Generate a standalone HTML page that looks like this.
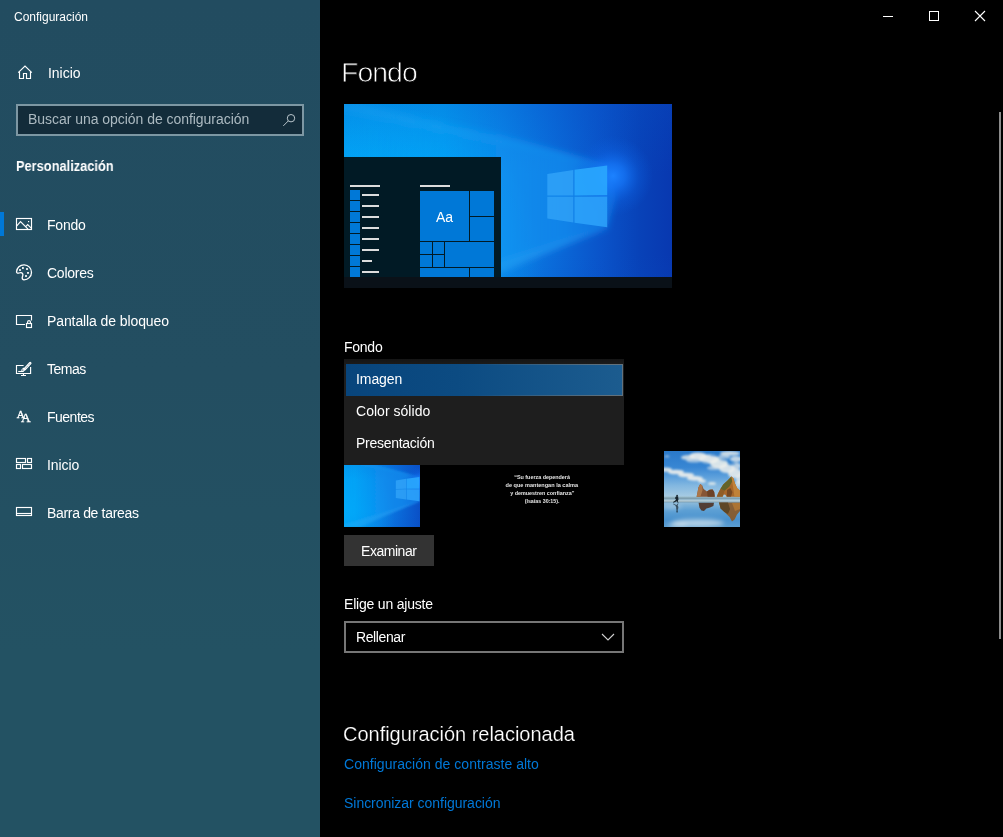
<!DOCTYPE html>
<html lang="es">
<head>
<meta charset="utf-8">
<title>Configuración</title>
<style>
html,body{margin:0;padding:0;background:#000;}
body{width:1003px;height:837px;position:relative;overflow:hidden;font-family:"Liberation Sans",sans-serif;color:#fff;}
.abs{position:absolute;}
.t{will-change:transform;position:absolute;white-space:nowrap;line-height:20px;height:20px;font-size:14px;color:#fff;}
#side{position:absolute;left:0;top:0;width:320px;height:837px;background:linear-gradient(180deg,#224c60 0%,#234e61 45%,#235263 78%,#235263 100%);}
#main{position:absolute;left:320px;top:0;width:683px;height:837px;background:#000;}
svg{position:absolute;overflow:visible;}
.ico{stroke:#fff;stroke-width:1.15;fill:none;}
.link{color:#0078d7;}
</style>
</head>
<body>
<svg width="0" height="0" style="position:absolute">
  <defs>
    <linearGradient id="wpg" x1="0" y1="0" x2="328" y2="0" gradientUnits="userSpaceOnUse">
      <stop offset="0" stop-color="#02a4f4"/>
      <stop offset="0.3" stop-color="#04a0f3"/>
      <stop offset="0.48" stop-color="#0a86e9"/>
      <stop offset="0.62" stop-color="#0a6edc"/>
      <stop offset="0.78" stop-color="#0a54ca"/>
      <stop offset="0.9" stop-color="#0842b8"/>
      <stop offset="1" stop-color="#0838b0"/>
    </linearGradient>
    <linearGradient id="wpv" x1="0" y1="-10" x2="0" y2="190" gradientUnits="userSpaceOnUse">
      <stop offset="0" stop-color="#0650c4" stop-opacity="0.3"/>
      <stop offset="0.4" stop-color="#0650c4" stop-opacity="0"/>
      <stop offset="0.8" stop-color="#0650c4" stop-opacity="0"/>
      <stop offset="1" stop-color="#0650c4" stop-opacity="0.14"/>
    </linearGradient>
    <radialGradient id="wpbl" cx="30" cy="165" r="170" gradientUnits="userSpaceOnUse">
      <stop offset="0" stop-color="#00b8ff" stop-opacity="0.75"/>
      <stop offset="0.5" stop-color="#00b0ff" stop-opacity="0.35"/>
      <stop offset="1" stop-color="#00a8ff" stop-opacity="0"/>
    </radialGradient>
    <radialGradient id="wpglow" cx="269" cy="72" r="40" gradientUnits="userSpaceOnUse">
      <stop offset="0" stop-color="#1c82ff" stop-opacity="1"/>
      <stop offset="0.3" stop-color="#1678fa" stop-opacity="0.75"/>
      <stop offset="0.65" stop-color="#0e68ea" stop-opacity="0.3"/>
      <stop offset="1" stop-color="#0a60e0" stop-opacity="0"/>
    </radialGradient>
    <linearGradient id="cone" x1="0" y1="0" x2="290" y2="0" gradientUnits="userSpaceOnUse">
      <stop offset="0" stop-color="#10a4f8" stop-opacity="0"/>
      <stop offset="0.45" stop-color="#10a2f8" stop-opacity="0.25"/>
      <stop offset="0.75" stop-color="#149cf8" stop-opacity="0.55"/>
      <stop offset="1" stop-color="#1a8cf8" stop-opacity="0.5"/>
    </linearGradient>
    <filter id="bl2" x="-20%" y="-20%" width="140%" height="140%"><feGaussianBlur stdDeviation="3"/></filter>
    <g id="wp">
      <rect x="-10" y="-20" width="348" height="230" fill="url(#wpg)"/>
      <rect x="-10" y="-20" width="348" height="230" fill="url(#wpv)"/>
      <rect x="-10" y="-20" width="348" height="230" fill="url(#wpbl)"/>
      <g filter="url(#bl2)">
        <polygon points="272,92 263,60 150,29 -10,-4 -10,210 60,205 263,125" fill="url(#cone)"/>
        <polygon points="263,62 -10,-8 -10,6" fill="#5cc4ff" opacity="0.1"/>
        <polygon points="263,123 60,186 110,190" fill="#7fd0ff" opacity="0.12"/>
      </g>
      <rect x="-10" y="-20" width="348" height="230" fill="url(#wpglow)"/>
      <polygon points="203.3,70 229.3,66 229.3,91.4 203.3,91.6" fill="#36a8fb" opacity="0.72"/>
      <polygon points="230.5,65.8 263.2,61.6 263.2,91.2 230.5,91.4" fill="#2caaff" opacity="0.85"/>
      <polygon points="203.3,92.8 229.3,92.7 229.3,118.5 203.3,114.6" fill="#36a6fa" opacity="0.7"/>
      <polygon points="230.5,92.7 263.2,92.5 263.2,123.2 230.5,118.7" fill="#30a6fc" opacity="0.8"/>
    </g>
  </defs>
</svg>
<div id="side">
  <div class="t" id="t1" style="left:14px;letter-spacing:0px;top:7px;font-size:12px;">Configuración</div>

  <div class="abs" style="left:16px;top:104px;width:284px;height:28px;border:2px solid #7d97a3;background:#132c3a;"></div>
  <!-- icons -->
  <svg class="ico" style="left:0;top:0" width="320" height="837" viewBox="0 0 320 837">
    <!-- home -->
    <path d="M18.2,72.7 L25,66 L31.8,72.7"/>
    <path d="M19.5,71.6 V78.5 H23.5 V73.5 H26.5 V78.5 H30.5 V71.6"/>
    <!-- search -->
    <circle cx="291" cy="118.2" r="3.7" stroke="#b9c5cb" stroke-width="1"/>
    <path d="M288.3,120.9 L283.3,125.9" stroke="#b9c5cb" stroke-width="1"/>
    <!-- fondo -->
    <rect x="16.5" y="218.5" width="15" height="11"/>
    <path d="M16.8,225.8 L20.5,221.7 L28,229.2 M25.7,226.6 L27.7,224.6 L31.2,228.1"/>
    <rect x="28" y="221" width="1.2" height="1.2" fill="#fff" stroke="none"/>
    <!-- colores -->
    <path d="M24,279.8 A7.5,7.5 0 1 0 16.5,272 C16.6,273.3 18,273.4 19.2,273 C20.6,272.5 22,272.6 22.7,273.8 C23.5,275.2 22.2,276.3 22.2,277.8 C22.2,279 23,279.8 24,279.8 Z" stroke-width="1.3"/>
    <g fill="#fff" stroke="none">
      <rect x="19.1" y="269.1" width="1.8" height="1.8"/>
      <rect x="22" y="267.1" width="1.8" height="1.8"/>
      <rect x="26.1" y="268.1" width="1.8" height="1.8"/>
      <rect x="27.1" y="272" width="1.8" height="1.8"/>
      <rect x="25.1" y="275.1" width="1.8" height="1.8"/>
    </g>
    <!-- pantalla de bloqueo -->
    <path d="M25,324.5 H16.5 V315.5 H31.5 V320.4"/>
    <rect x="26.5" y="323.5" width="5" height="4"/>
    <path d="M27.6,323.5 V322 A1.4,1.4 0 0 1 30.4,322 V323.5"/>
    <!-- temas -->
    <path d="M23.6,365.5 H16.5 V373.5 H30.6 V367"/>
    <path d="M23.5,373.5 V375.5 M21,375.5 H26"/>
    <path d="M18.2,371.5 H23.6" stroke-width="1.1"/>
    <path d="M25,368.9 L30.2,363.2" stroke-width="2.7" stroke-linecap="round"/>
    <path d="M25.6,368.3 L30.1,363.3" stroke="#234d60" stroke-width="0.7" stroke-dasharray="1.1 1"/>
    <path d="M21.2,371.6 L21.5,369.5 L23.5,367.6 L25.6,369.7 L23.7,371.6 Z" fill="#fff" stroke="none"/>
    <rect x="22.2" y="369.5" width="1.1" height="1.1" fill="#234d60" stroke="none"/>
    <!-- inicio -->
    <rect x="16.5" y="458.5" width="9" height="4"/>
    <rect x="27.5" y="458.5" width="4" height="4"/>
    <rect x="16.5" y="464.5" width="4" height="4"/>
    <rect x="22.5" y="464.5" width="9" height="4"/>
    <!-- barra de tareas -->
    <rect x="16.5" y="507.5" width="15" height="8"/>
    <path d="M16.5,513.5 H31.5"/>
  </svg>
  <!-- fuentes -->
  <svg style="left:0;top:400px;will-change:transform" width="48" height="32" viewBox="0 400 48 32" font-family="Liberation Serif, serif" fill="#fff">
    <text x="16.7" y="417.8" font-size="11" stroke="#fff" stroke-width="0.35">A</text>
    <text x="21" y="422" font-size="13.4" stroke="#fff" stroke-width="0.35">A</text>
  </svg>
  <div class="t" id="t2" style="left:47.7px;letter-spacing:-0.03px;top:63px;">Inicio</div>

  <div class="t" id="t3" style="left:27.7px;letter-spacing:-0.04px;top:109px;color:#acbac1;">Buscar una opción de configuración</div>

  <div class="t" id="t4" style="left:16.3px;top:156px;font-weight:bold;transform:scaleX(0.916);transform-origin:0 0;">Personalización</div>

  <div class="abs" style="left:0;top:212px;width:4px;height:24px;background:#0078d7;"></div>

  <div class="t" id="t5" style="left:46.8px;letter-spacing:-0.2px;top:215px;">Fondo</div>
  <div class="t" id="t6" style="left:47.4px;letter-spacing:-0.24px;top:263px;">Colores</div>
  <div class="t" id="t7" style="left:46.8px;letter-spacing:-0.1px;top:311px;">Pantalla de bloqueo</div>
  <div class="t" id="t8" style="left:47.4px;letter-spacing:-0.5px;top:359px;">Temas</div>
  <div class="t" id="t9" style="left:46.8px;letter-spacing:-0.5px;top:407px;">Fuentes</div>
  <div class="t" id="t10" style="left:46.8px;letter-spacing:-0.1px;top:455px;">Inicio</div>
  <div class="t" id="t11" style="left:46.8px;letter-spacing:-0.33px;top:503px;">Barra de tareas</div>
</div>

<div id="main">
  <!-- window controls -->
  <svg style="left:0;top:0" width="683" height="40" viewBox="320 0 683 40" shape-rendering="crispEdges">
    <rect x="883" y="16" width="10" height="1" fill="#fff"/>
    <rect x="929.5" y="11.5" width="9" height="9" fill="none" stroke="#fff" stroke-width="1"/>
  </svg>
  <svg style="left:0;top:0" width="683" height="40" viewBox="320 0 683 40">
    <path d="M975,11 L985,21 M985,11 L975,21" stroke="#fff" stroke-width="1.1" fill="none"/>
  </svg>
  <!-- scrollbar -->
  <div class="abs" style="left:679px;top:112px;width:2px;height:527px;background:#8b8b8b;"></div>

  <div class="t" id="t12" style="left:21.4px;letter-spacing:-0.95px;top:51.6px;-webkit-text-stroke:0.8px #000;font-size:28.4px;line-height:40px;height:40px;">Fondo</div>

  <!-- preview -->
  <div class="abs" id="preview" style="left:24px;top:104px;width:328px;height:184px;background:#0a1118;overflow:hidden;">
    <svg id="wall" style="left:0;top:0;overflow:hidden" width="328" height="173" viewBox="0 0 328 173"><use href="#wp"/></svg>
    <div class="abs" id="startp" style="left:0;top:53px;width:157px;height:120px;background:#011a25;overflow:hidden;">
      <svg style="left:0;top:0" width="157" height="120" viewBox="344 157 157 120" shape-rendering="crispEdges">
        <g fill="#dcdcdc">
          <rect x="350" y="185" width="30" height="2"/>
          <rect x="420" y="185" width="30" height="2"/>
          <rect x="362" y="194" width="17" height="2"/>
          <rect x="362" y="205" width="17" height="2"/>
          <rect x="362" y="216" width="17" height="2"/>
          <rect x="362" y="227" width="17" height="2"/>
          <rect x="362" y="238" width="17" height="2"/>
          <rect x="362" y="249" width="17" height="2"/>
          <rect x="362" y="260" width="10" height="2"/>
          <rect x="362" y="271" width="17" height="2"/>
        </g>
        <g fill="#0078d7">
          <rect x="350" y="190" width="10" height="10"/>
          <rect x="350" y="201" width="10" height="10"/>
          <rect x="350" y="212" width="10" height="10"/>
          <rect x="350" y="223" width="10" height="10"/>
          <rect x="350" y="234" width="10" height="10"/>
          <rect x="350" y="245" width="10" height="10"/>
          <rect x="350" y="256" width="10" height="10"/>
          <rect x="350" y="267" width="10" height="10"/>
          <rect x="420" y="191" width="49" height="50"/>
          <rect x="470" y="191" width="24" height="25"/>
          <rect x="470" y="217" width="24" height="24"/>
          <rect x="420" y="242" width="12" height="12"/>
          <rect x="433" y="242" width="11" height="12"/>
          <rect x="420" y="255" width="12" height="12"/>
          <rect x="433" y="255" width="11" height="12"/>
          <rect x="445" y="242" width="49" height="25"/>
          <rect x="420" y="268" width="49" height="9"/>
          <rect x="470" y="268" width="24" height="9"/>
        </g>
      </svg>
      <div class="t" id="t13" style="left:92px;top:50px;">Aa</div>
    </div>
  </div>

  <div class="t" id="t14" style="left:24.1px;letter-spacing:-0.25px;top:337px;">Fondo</div>

  <!-- thumbnails -->
  <svg id="th1" style="left:24px;top:451px;overflow:hidden" width="76" height="76" viewBox="71.7 -4.7 193 193"><use href="#wp"/></svg>
  <!-- text thumbnail -->
  <svg id="th3" style="left:184px;top:451px;will-change:transform" width="76" height="76" viewBox="504 451 76 76" font-family="Liberation Sans, sans-serif" font-weight="bold" font-size="5.6" fill="#e6e6e6" text-anchor="middle">
    <rect x="504" y="451" width="76" height="76" fill="#000"/>
    <text x="542.1" y="479.3" textLength="55.8" lengthAdjust="spacingAndGlyphs">“Su fuerza dependerá</text>
    <text x="541.8" y="487.1" textLength="72.5" lengthAdjust="spacingAndGlyphs">de que mantengan la calma</text>
    <text x="542.3" y="494.8" textLength="64.3" lengthAdjust="spacingAndGlyphs">y demuestren confianza”</text>
    <text x="542.1" y="502.5" textLength="34.9" lengthAdjust="spacingAndGlyphs">(Isaías 30:15).</text>
  </svg>
  <!-- beach thumbnail -->
  <svg id="th5" style="left:344px;top:451px;overflow:hidden" width="76" height="76" viewBox="0 0 76 76">
    <defs>
      <linearGradient id="sky" x1="0" y1="0" x2="0" y2="46" gradientUnits="userSpaceOnUse">
        <stop offset="0" stop-color="#2a79ca"/>
        <stop offset="0.35" stop-color="#3886d3"/>
        <stop offset="0.55" stop-color="#5a9edb"/>
        <stop offset="0.75" stop-color="#82b7e0"/>
        <stop offset="1" stop-color="#a8cce3"/>
      </linearGradient>
      <linearGradient id="sea" x1="0" y1="46" x2="0" y2="76" gradientUnits="userSpaceOnUse">
        <stop offset="0" stop-color="#a5c6d8"/>
        <stop offset="0.18" stop-color="#8dbbdb"/>
        <stop offset="0.45" stop-color="#5c9fd4"/>
        <stop offset="0.75" stop-color="#4a92ce"/>
        <stop offset="1" stop-color="#5c9ed2"/>
      </linearGradient>
      <filter id="cb" x="-20%" y="-40%" width="140%" height="180%"><feGaussianBlur stdDeviation="1.1"/></filter>
      <filter id="cb2" x="-20%" y="-40%" width="140%" height="180%"><feGaussianBlur stdDeviation="2"/></filter>
      <filter id="rb" x="-10%" y="-10%" width="120%" height="120%"><feGaussianBlur stdDeviation="0.45"/></filter>
    </defs>
    <rect width="76" height="46" fill="url(#sky)"/>
    <rect y="45.5" width="76" height="30.5" fill="url(#sea)"/>
    <g filter="url(#cb)" fill="#eef0ec">
      <ellipse cx="24" cy="6.5" rx="7" ry="2.6" opacity="0.75"/>
      <ellipse cx="34" cy="5" rx="9" ry="3.6" opacity="0.9"/>
      <ellipse cx="45" cy="8" rx="10" ry="4.6" opacity="0.9"/>
      <ellipse cx="55" cy="12.5" rx="9" ry="4.8" opacity="0.88"/>
      <ellipse cx="63" cy="17.5" rx="8" ry="4.6" opacity="0.85"/>
      <ellipse cx="71" cy="22.5" rx="7" ry="4.8" opacity="0.85"/>
      <ellipse cx="76" cy="28" rx="4" ry="5" opacity="0.7"/>
      <ellipse cx="66" cy="2.4" rx="10" ry="2.4" opacity="0.8"/>
      <ellipse cx="72" cy="8" rx="6" ry="3" opacity="0.75"/>
      <ellipse cx="60" cy="6" rx="6" ry="2.6" opacity="0.6"/>
      <ellipse cx="72" cy="15" rx="5" ry="3.4" opacity="0.7"/>
      <ellipse cx="30" cy="9.6" rx="8" ry="2" opacity="0.6"/>
      <ellipse cx="50" cy="17" rx="7" ry="2" opacity="0.55"/>
      <ellipse cx="2" cy="18.6" rx="6" ry="2.2" opacity="0.85"/>
      <ellipse cx="12" cy="21" rx="8" ry="2.3" opacity="0.9"/>
      <ellipse cx="22" cy="24" rx="8" ry="2.3" opacity="0.9"/>
      <ellipse cx="31" cy="27.4" rx="8" ry="2.4" opacity="0.9"/>
      <ellipse cx="38" cy="30" rx="4" ry="1.8" opacity="0.85"/>
      <ellipse cx="48" cy="32.4" rx="4" ry="1.5" opacity="0.8"/>
      <ellipse cx="3" cy="5.4" rx="2.5" ry="0.9" opacity="0.6"/>
      <ellipse cx="74" cy="33" rx="3" ry="3.4" opacity="0.6"/>
    </g>
    <g filter="url(#cb)" fill="#2f7fce">
      <ellipse cx="50" cy="4" rx="4" ry="1.3" opacity="0.55"/>
      <ellipse cx="60" cy="8.5" rx="4" ry="1.4" opacity="0.5"/>
      <ellipse cx="68" cy="13" rx="3.4" ry="1.4" opacity="0.5"/>
      <ellipse cx="40" cy="12" rx="4" ry="1.2" opacity="0.4"/>
    </g>
    <g filter="url(#cb2)" fill="#e8f0f2">
      <ellipse cx="34" cy="72" rx="26" ry="4" opacity="0.6"/>
      <ellipse cx="14" cy="74" rx="10" ry="3" opacity="0.45"/>
      <ellipse cx="8" cy="56" rx="10" ry="2.5" opacity="0.3"/>
    </g>
    <!-- waves band -->
    <rect y="45.6" width="76" height="5.4" fill="#93b2c2" opacity="0.6"/>
    <rect y="46.6" width="76" height="1.2" fill="#4f6c7a" opacity="0.4"/>
    <rect y="49.4" width="76" height="1.2" fill="#d2dde0" opacity="0.75"/>
    <rect y="50.6" width="76" height="0.9" fill="#6a8796" opacity="0.55"/>
    <!-- rocks -->
    <g filter="url(#rb)">
      <path d="M32.6,45.8 L33.4,42 L34.4,36.6 L36.2,33 L38.2,34.4 L39.6,38 L43,40.6 L45.6,38.8 L48.6,38.6 L50.2,41 L50.8,45.8 Z" fill="#865534"/>
      <path d="M34.4,36.6 L36.2,33 L38.2,34.4 L38.6,39 L36.4,45.8 L32.6,45.8 L33.4,42 Z" fill="#ab764a"/>
      <path d="M43,40.6 L45.6,38.8 L48.6,38.6 L50.2,41 L50.8,45.8 L43.6,45.8 Z" fill="#6c4226"/>
      <path d="M52.8,45.8 L54,42.6 L56.4,38 L59.2,33.6 L63.6,29.4 L67.4,25.6 L69.4,27.2 L71,32.6 L73.2,37.2 L76,39.8 L76,45.8 L62.6,45.8 L61.4,43.8 L59.8,43.6 L58.6,45.8 Z" fill="#a8682c"/>
      <path d="M56.4,38 L59.2,33.6 L63.6,29.4 L67.4,25.6 L68.4,30 L65.4,35.4 L60.6,39.8 Z" fill="#63642b"/>
      <path d="M67.4,25.6 L69.4,27.2 L71,32.6 L73.2,37.2 L76,39.8 L76,45.8 L70.4,45.8 L69.4,38 Z" fill="#c08238"/>
      <path d="M63,39 L66.4,37 L68.4,41 L67,45.8 L62.8,45.8 Z" fill="#6e4420" opacity="0.85"/>
      <path d="M54,42.6 L56.4,38 L60.6,39.8 L58.6,45.8 L52.8,45.8 Z" fill="#8a5a28" opacity="0.8"/>
      <!-- reflections -->
      <path d="M34.6,51.8 L50,51.8 L49.4,55 L46,56.6 L42.4,57.4 L40,60 L37.4,59.6 L35.4,56.4 Z" fill="#4e3526" opacity="0.92"/>
      <path d="M55,51.6 L76,51.6 L76,60 L73,63.4 L70.6,68.4 L68,70.4 L65.6,66 L60.4,61 L56.6,57.6 Z" fill="#8a5826" opacity="0.9"/>
      <path d="M55,51.6 L64,51.6 L66,58 L64,63 L60.4,61 L56.6,57.6 Z" fill="#54401f" opacity="0.8"/>
      <path d="M68,52 L76,52 L76,58 L71,60 Z" fill="#b87a32" opacity="0.75"/>
    </g>
    <!-- runner -->
    <g fill="#17242e">
      <ellipse cx="13.1" cy="44.5" rx="0.85" ry="0.85"/>
      <path d="M12.1,45.3 L14.1,45.3 L14.5,48.4 L13.7,50.2 L14.7,51.4 L13.8,51.7 L12.6,50.3 L11.2,50.9 L9.3,51.7 L9.1,51 L11.3,49.6 L12.1,48 L10.9,47.4 L11.1,46.7 Z"/>
      <path d="M12.2,58.8 L14,58.8 L14.4,56 L13.6,54.2 L14.6,52.6 L13.8,52.4 L12.6,54 L11.2,53.4 L9.4,52.6 L9.2,53.2 L11.4,54.6 L12.2,56.4 Z" opacity="0.7"/>
      <ellipse cx="13.1" cy="60.2" rx="0.8" ry="1.6" opacity="0.65"/>
    </g>
  </svg>

  <!-- dropdown -->
  <div class="abs" id="dd" style="left:24px;top:359px;width:280px;height:106px;background:#1e1e1e;">
    <div class="abs" style="left:0;top:0;width:280px;height:6px;background:linear-gradient(180deg,#151515,#1c1c1c);"></div>
    <div class="abs" id="sel" style="left:2px;top:5.4px;width:277px;height:31.2px;background:linear-gradient(90deg,#08457c 0%,#0c4b82 40%,#1c5c8f 100%);"></div>
    <div class="abs" style="left:2px;top:5.4px;width:275.4px;height:29.6px;border:0.8px solid rgba(128,122,116,0.7);-webkit-mask-image:linear-gradient(90deg,transparent 45%,#000 95%);mask-image:linear-gradient(90deg,transparent 45%,#000 95%);"></div>
    <div class="t" id="t15" style="left:12.1px;letter-spacing:-0.08px;top:10px;">Imagen</div>
    <div class="t" id="t16" style="left:12.2px;letter-spacing:0.03px;top:42px;">Color sólido</div>
    <div class="t" id="t17" style="left:11.5px;letter-spacing:-0.27px;top:74px;">Presentación</div>
  </div>

  <!-- button -->
  <div class="abs" style="left:24px;top:535px;width:90px;height:31px;background:#333;"></div>
  <div class="t" id="t18" style="left:41.1px;letter-spacing:-0.46px;top:541px;">Examinar</div>

  <div class="t" id="t19" style="left:24.2px;letter-spacing:-0.2px;top:594px;">Elige un ajuste</div>
  <div class="abs" style="left:24px;top:621px;width:276px;height:28px;border:2px solid #767676;"></div>
  <div class="t" id="t20" style="left:36.1px;letter-spacing:-0.4px;top:627px;">Rellenar</div>
  <svg style="left:0;top:0" width="683" height="837" viewBox="320 0 683 837">
    <path d="M602,634 L608,640 L614,634" stroke="#d0d0d0" stroke-width="1.1" fill="none"/>
  </svg>

  <div class="t" id="t21" style="left:23.2px;letter-spacing:-0.02px;top:719px;-webkit-text-stroke:0.2px #000;font-size:20px;line-height:30px;height:30px;">Configuración relacionada</div>
  <div class="t link" id="t22" style="left:24.4px;letter-spacing:0.035px;top:754px;">Configuración de contraste alto</div>
  <div class="t link" id="t23" style="left:24.4px;letter-spacing:-0.03px;top:793px;">Sincronizar configuración</div>
</div>
</body>
</html>
